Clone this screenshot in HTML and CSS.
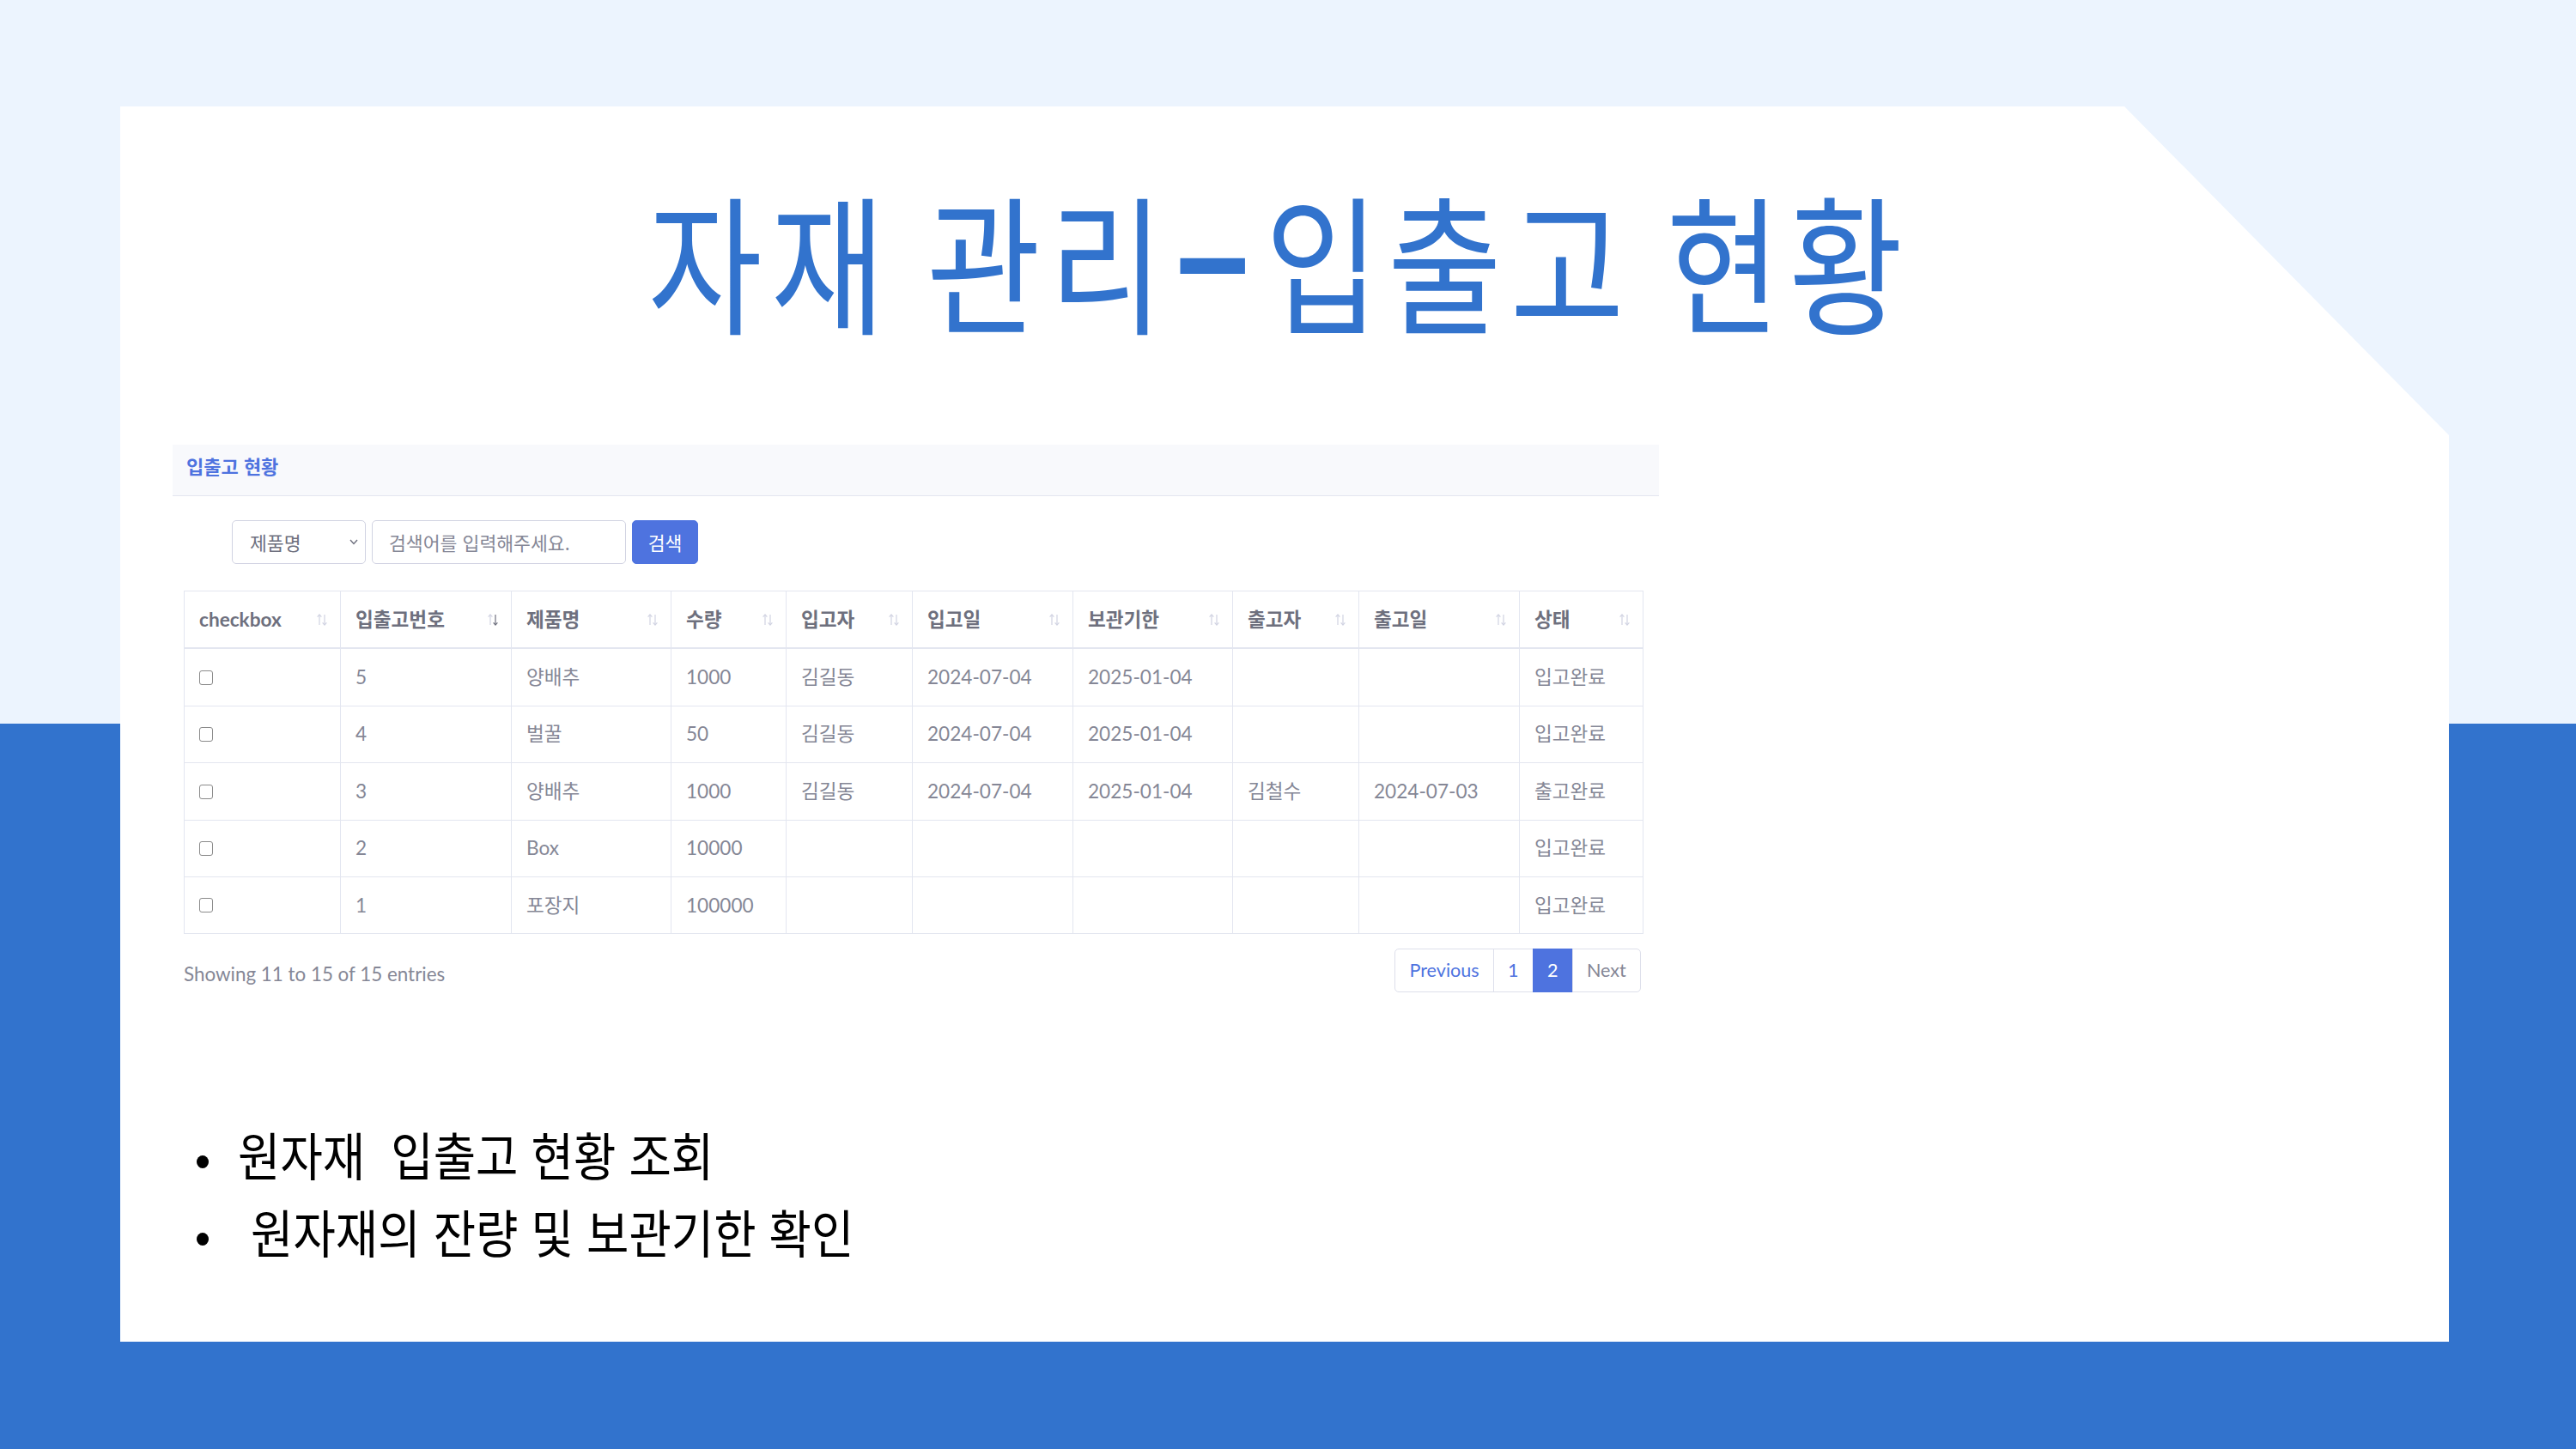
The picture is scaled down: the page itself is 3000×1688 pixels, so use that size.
FILE: index.html
```html
<!DOCTYPE html>
<html lang="ko">
<head>
<meta charset="utf-8">
<title>자재 관리-입출고 현황</title>
<link rel="stylesheet" href="styles.css">
</head>
<body>
<div class="slide">
  <div class="card">
    <h1 class="title"><span class="title-text">자재 관리<span class="dash">-</span>입출고 현황</span></h1>
    <section class="panel">
      <div class="panel-head">입출고 현황</div>
      <div class="panel-body">
        <div class="search">
          <div class="select"><span>제품명</span><svg class="chev" width="10" height="7" viewBox="0 0 10 7"><polyline points="1,1 5,5.5 9,1" fill="none" stroke="#6e707e" stroke-width="1.4"/></svg></div>
          <input class="search-input" type="text" placeholder="검색어를 입력해주세요.">
          <button class="btn" type="button">검색</button>
        </div>
        <table class="grid">
          <thead>
            <tr>
              <th class="c1"><div class="th"><span>checkbox</span><svg class="sort" width="14" height="16" viewBox="0 0 14 16"><g fill="none" stroke-width="1.2" stroke="#d1d3e2"><line x1="4" y1="2" x2="4" y2="14"/><polyline points="1.6,4.6 4,2 6.4,4.6"/><line x1="10" y1="2" x2="10" y2="14"/><polyline points="7.6,11.4 10,14 12.4,11.4"/></g></svg></div></th>
              <th class="c2"><div class="th"><span>입출고번호</span><svg class="sort" width="14" height="16" viewBox="0 0 14 16"><g fill="none" stroke-width="1.2"><g stroke="#d1d3e2"><line x1="4" y1="2" x2="4" y2="14"/><polyline points="1.6,4.6 4,2 6.4,4.6"/></g><g stroke="#6e707e"><line x1="10" y1="2" x2="10" y2="14"/><polyline points="7.6,11.4 10,14 12.4,11.4"/></g></g></svg></div></th>
              <th class="c3"><div class="th"><span>제품명</span><svg class="sort" width="14" height="16" viewBox="0 0 14 16"><g fill="none" stroke-width="1.2" stroke="#d1d3e2"><line x1="4" y1="2" x2="4" y2="14"/><polyline points="1.6,4.6 4,2 6.4,4.6"/><line x1="10" y1="2" x2="10" y2="14"/><polyline points="7.6,11.4 10,14 12.4,11.4"/></g></svg></div></th>
              <th class="c4"><div class="th"><span>수량</span><svg class="sort" width="14" height="16" viewBox="0 0 14 16"><g fill="none" stroke-width="1.2" stroke="#d1d3e2"><line x1="4" y1="2" x2="4" y2="14"/><polyline points="1.6,4.6 4,2 6.4,4.6"/><line x1="10" y1="2" x2="10" y2="14"/><polyline points="7.6,11.4 10,14 12.4,11.4"/></g></svg></div></th>
              <th class="c5"><div class="th"><span>입고자</span><svg class="sort" width="14" height="16" viewBox="0 0 14 16"><g fill="none" stroke-width="1.2" stroke="#d1d3e2"><line x1="4" y1="2" x2="4" y2="14"/><polyline points="1.6,4.6 4,2 6.4,4.6"/><line x1="10" y1="2" x2="10" y2="14"/><polyline points="7.6,11.4 10,14 12.4,11.4"/></g></svg></div></th>
              <th class="c6"><div class="th"><span>입고일</span><svg class="sort" width="14" height="16" viewBox="0 0 14 16"><g fill="none" stroke-width="1.2" stroke="#d1d3e2"><line x1="4" y1="2" x2="4" y2="14"/><polyline points="1.6,4.6 4,2 6.4,4.6"/><line x1="10" y1="2" x2="10" y2="14"/><polyline points="7.6,11.4 10,14 12.4,11.4"/></g></svg></div></th>
              <th class="c7"><div class="th"><span>보관기한</span><svg class="sort" width="14" height="16" viewBox="0 0 14 16"><g fill="none" stroke-width="1.2" stroke="#d1d3e2"><line x1="4" y1="2" x2="4" y2="14"/><polyline points="1.6,4.6 4,2 6.4,4.6"/><line x1="10" y1="2" x2="10" y2="14"/><polyline points="7.6,11.4 10,14 12.4,11.4"/></g></svg></div></th>
              <th class="c8"><div class="th"><span>출고자</span><svg class="sort" width="14" height="16" viewBox="0 0 14 16"><g fill="none" stroke-width="1.2" stroke="#d1d3e2"><line x1="4" y1="2" x2="4" y2="14"/><polyline points="1.6,4.6 4,2 6.4,4.6"/><line x1="10" y1="2" x2="10" y2="14"/><polyline points="7.6,11.4 10,14 12.4,11.4"/></g></svg></div></th>
              <th class="c9"><div class="th"><span>출고일</span><svg class="sort" width="14" height="16" viewBox="0 0 14 16"><g fill="none" stroke-width="1.2" stroke="#d1d3e2"><line x1="4" y1="2" x2="4" y2="14"/><polyline points="1.6,4.6 4,2 6.4,4.6"/><line x1="10" y1="2" x2="10" y2="14"/><polyline points="7.6,11.4 10,14 12.4,11.4"/></g></svg></div></th>
              <th class="c10"><div class="th"><span>상태</span><svg class="sort" width="14" height="16" viewBox="0 0 14 16"><g fill="none" stroke-width="1.2" stroke="#d1d3e2"><line x1="4" y1="2" x2="4" y2="14"/><polyline points="1.6,4.6 4,2 6.4,4.6"/><line x1="10" y1="2" x2="10" y2="14"/><polyline points="7.6,11.4 10,14 12.4,11.4"/></g></svg></div></th>
            </tr>
          </thead>
          <tbody>
            <tr><td><span class="cb"></span></td><td>5</td><td>양배추</td><td>1000</td><td>김길동</td><td>2024-07-04</td><td>2025-01-04</td><td></td><td></td><td>입고완료</td></tr>
            <tr><td><span class="cb"></span></td><td>4</td><td>벌꿀</td><td>50</td><td>김길동</td><td>2024-07-04</td><td>2025-01-04</td><td></td><td></td><td>입고완료</td></tr>
            <tr><td><span class="cb"></span></td><td>3</td><td>양배추</td><td>1000</td><td>김길동</td><td>2024-07-04</td><td>2025-01-04</td><td>김철수</td><td>2024-07-03</td><td>출고완료</td></tr>
            <tr><td><span class="cb"></span></td><td>2</td><td>Box</td><td>10000</td><td></td><td></td><td></td><td></td><td></td><td>입고완료</td></tr>
            <tr><td><span class="cb"></span></td><td>1</td><td>포장지</td><td>100000</td><td></td><td></td><td></td><td></td><td></td><td>입고완료</td></tr>
          </tbody>
        </table>
        <div class="foot">
          <div class="info">Showing 11 to 15 of 15 entries</div>
          <ul class="pager">
            <li class="pg first">Previous</li>
            <li class="pg">1</li>
            <li class="pg active">2</li>
            <li class="pg last disabled">Next</li>
          </ul>
        </div>
      </div>
    </section>
    <ul class="bullets">
      <li><span class="bt">원자재  입출고 현황 조회</span></li>
      <li><span class="bt"> 원자재의 잔량 및 보관기한 확인</span></li>
    </ul>
  </div>
</div>
</body>
</html>
```

FILE: styles.css
```css
* { box-sizing: border-box; }
html, body { margin: 0; padding: 0; }
body {
  width: 3000px;
  height: 1688px;
  overflow: hidden;
  font-family: "Lato", "Noto Sans CJK KR", sans-serif;
}
.slide {
  width: 3000px;
  height: 1688px;
  padding-top: 124px;
  background: linear-gradient(to bottom, #ecf4fe 0, #ecf4fe 843px, #3273cd 843px, #3273cd 100%);
}
.card {
  margin-left: 140px;
  width: 2712px;
  height: 1439px;
  background: #ffffff;
  clip-path: polygon(0 0, 2334px 0, 2712px 383px, 2712px 100%, 0 100%);
  overflow: hidden;
}
.title {
  margin: 0;
  padding-top: 89px;
  padding-right: 12px;
  text-align: center;
  font-family: "Noto Sans CJK KR", sans-serif;
  font-weight: 400;
  font-size: 174px;
  line-height: 174px;
  height: 263px;
  color: #3273cd;
  word-spacing: -14px;
  letter-spacing: 12px;
}
.title-text {
  display: inline-block;
  transform: scaleX(0.83);
  transform-origin: center;
  white-space: nowrap;
}
.dash {
  display: inline-block;
  font-weight: 700;
  transform: scaleX(1.9);
  margin: 0 24px 0 30px;
}
.panel {
  margin: 131px 0 0 61px;
  width: 1731px;
}
.panel-head {
  background: #f8f9fc;
  border-bottom: 1px solid #e3e6f0;
  padding: 11px 16px 21px;
  line-height: 27px;
  font-family: "Noto Sans CJK KR", sans-serif;
  font-weight: 700;
  font-size: 22px;
  color: #4e73df;
}
.panel-body {
  padding-left: 13px;
}
.search {
  display: flex;
  gap: 7px;
  margin: 28px 0 0 56px;
  height: 51px;
  font-family: "Noto Sans CJK KR", sans-serif;
  font-size: 21.6px;
}
.select {
  width: 156px;
  height: 51px;
  border: 1px solid #d1d3e2;
  border-radius: 5px;
  padding: 0 8px 0 20px;
  display: flex;
  align-items: center;
  justify-content: space-between;
  color: #6e707e;
}
.search-input {
  width: 296px;
  height: 51px;
  border: 1px solid #d1d3e2;
  border-radius: 5px;
  padding: 0 19px;
  font-family: "Noto Sans CJK KR", sans-serif;
  font-size: 21.6px;
  color: #6e707e;
  outline: none;
}
.search-input::placeholder { color: #858796; }
.btn {
  width: 77px;
  height: 51px;
  border: 1px solid #4e73df;
  border-radius: 5px;
  background: #4e73df;
  color: #ffffff;
  font-family: "Noto Sans CJK KR", sans-serif;
  font-size: 21.6px;
  padding: 0;
}
.grid {
  margin-top: 31px;
  width: 1699px;
  table-layout: fixed;
  border-collapse: collapse;
  border: 1px solid #e3e6f0;
  font-size: 22.6px;
  color: #858796;
}
.grid th, .grid td {
  border: 1px solid #e3e6f0;
  padding: 16.5px 17px;
  line-height: 32.4px;
  text-align: left;
  vertical-align: middle;
  font-weight: 400;
  white-space: nowrap;
}
.grid thead th {
  border-bottom: 2px solid #e3e6f0;
  font-weight: 700;
  color: #6e707e;
}
.th {
  display: flex;
  align-items: center;
  justify-content: space-between;
}
.sort { margin-right: -3px; flex: none; }
.c1 { width: 182px; }
.c2 { width: 199px; }
.c3 { width: 186px; }
.c4 { width: 134px; }
.c5 { width: 147px; }
.c6 { width: 187px; }
.c7 { width: 186px; }
.c8 { width: 147px; }
.c9 { width: 187px; }
.c10 { width: 144px; }
.cb {
  display: inline-block;
  width: 16px;
  height: 17px;
  border: 1.5px solid #8a8a8a;
  border-radius: 3px;
  vertical-align: middle;
  margin-top: -4px;
}
.foot {
  width: 1699px;
  margin-top: 17px;
  display: flex;
  justify-content: space-between;
  align-items: flex-start;
}
.info {
  padding-top: 14px;
  line-height: 32px;
  font-size: 22.4px;
  color: #858796;
}
.pager {
  display: flex;
  list-style: none;
  margin: 0 2px 0 0;
  padding: 0;
}
.pg {
  padding: 10.8px 16.2px;
  line-height: 27px;
  font-size: 21.6px;
  border: 1px solid #dddfeb;
  margin-left: -1px;
  color: #4e73df;
  background: #ffffff;
}
.pg.first { border-radius: 5px 0 0 5px; margin-left: 0; }
.pg.last { border-radius: 0 5px 5px 0; }
.pg.active { background: #4e73df; border-color: #4e73df; color: #ffffff; }
.pg.disabled { color: #858796; }
.bullets {
  list-style: none;
  margin: 143px 0 0 89px;
  padding: 0;
}
.bullets li {
  display: flex;
  align-items: flex-start;
  height: 90px;
  font-family: "Noto Sans CJK KR", sans-serif;
  font-weight: 400;
  font-size: 60px;
  line-height: 90px;
  color: #000000;
}
.bullets li::before {
  content: "";
  flex: none;
  width: 14px;
  height: 15px;
  border-radius: 50%;
  background: #000000;
  margin-top: 47px;
  margin-right: 34px;
}
.bt {
  display: inline-block;
  white-space: pre;
  transform: scaleX(0.895);
  transform-origin: left center;
}
```
